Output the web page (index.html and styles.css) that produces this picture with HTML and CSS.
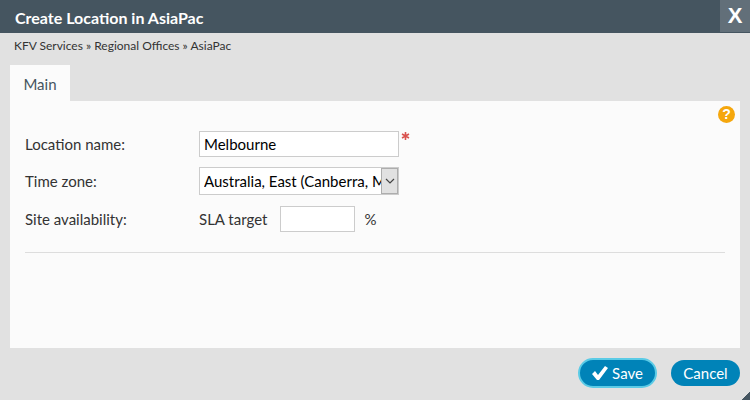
FILE: index.html
```html
<!DOCTYPE html>
<html lang="en">
<head>
    <meta charset="utf-8">
    <title>Create Location in AsiaPac</title>
    <link rel="stylesheet" href="styles.css">
</head>
<body>
    <header class="titlebar">
        <h1>Create Location in AsiaPac</h1>
        <button type="button" class="close">X</button>
    </header>

    <nav class="breadcrumb">
        <a href="#">KFV Services</a> » <a href="#">Regional Offices</a> » <a href="#">AsiaPac</a>
    </nav>

    <form class="dialog">
        <div class="tabs">
            <button type="button" class="tab">Main</button>
        </div>

        <div class="panel">
            <button type="button" class="help" aria-label="Help">?</button>

            <div class="fields">
                <label for="name">Location name:</label>
                <div class="field">
                    <input type="text" id="name" class="text" value="Melbourne" required>
                    <svg class="required" width="9" height="8" viewBox="0 0 9 8">
                        <path d="M4.5 0v8M1 2l7 4M8 2l-7 4"/>
                    </svg>
                </div>

                <label for="timezone">Time zone:</label>
                <div class="field">
                    <div class="select">
                        <select id="timezone">
                            <option>Australia, East (Canberra, Melbourne, Sydney)</option>
                        </select>
                        <span class="arrow">
                            <svg width="10" height="6" viewBox="0 0 10 6"><path d="M1 1l4 4 4-4"/></svg>
                        </span>
                    </div>
                </div>

                <span>Site availability:</span>
                <div class="field sla">
                    <label for="sla">SLA target</label>
                    <input type="text" id="sla" class="text short">
                    <span>%</span>
                </div>
            </div>
        </div>

        <div class="actions">
            <button type="submit" class="button save">
                <svg width="16" height="16" viewBox="0 0 16 16"><path d="M0 9l3-3 3 4 7-9 3 2-9 12H5z"/></svg>
                Save
            </button>
            <button type="button" class="button">Cancel</button>
        </div>
    </form>

    <div class="resize"></div>
</body>
</html>
```

FILE: styles.css
```css
* {
    box-sizing: border-box;
}
body {
    display: flex;
    flex-direction: column;
    position: relative;
    min-height: 100vh;
    margin: 0;
    background: #e1e1e1;
    color: #333;
    font-family: Lato, sans-serif;
    font-size: 15px;
    line-height: 20px;
}
button, input, select {
    font: inherit;
}
button {
    border: none;
    padding: 0;
    cursor: pointer;
}
.titlebar {
    display: flex;
    justify-content: space-between;
    align-items: center;
    height: 33px;
    padding-left: 15px;
    background: #455560;
    color: #fff;
}
.titlebar h1 {
    margin: 2px 0 0;
    font-size: 16px;
    line-height: 20px;
    font-weight: bold;
}
.close {
    align-self: flex-start;
    width: 30px;
    height: 32px;
    background: #626f79;
    color: #fff;
    font-family: "Liberation Sans", sans-serif;
    font-size: 22px;
    font-weight: bold;
}
.breadcrumb {
    padding: 5px 14px 0;
    font-size: 12px;
    line-height: 16px;
}
.breadcrumb a {
    color: inherit;
    text-decoration: none;
}
.dialog {
    display: flex;
    flex: 1;
    flex-direction: column;
    padding: 11px 10px 0;
}
.tab {
    display: block;
    min-width: 60px;
    height: 36px;
    padding: 2px 13px 0;
    background: #fbfbfb;
    color: #455560;
}
.panel {
    position: relative;
    flex: 1;
    padding: 30px 15px;
    background: #fbfbfb;
}
.help {
    position: absolute;
    top: 5px;
    right: 5px;
    width: 17px;
    height: 17px;
    border-radius: 50%;
    background: #f5a70d;
    color: #fff;
    font-family: "Liberation Sans", sans-serif;
    font-size: 14px;
    line-height: 17px;
    font-weight: bold;
}
.fields {
    display: grid;
    grid-template-columns: 164px 1fr;
    gap: 10px;
    align-items: center;
    padding-bottom: 19px;
    border-bottom: 1px solid #ddd;
}
.field {
    display: flex;
    align-items: center;
}
.text, .select {
    width: 200px;
    height: 26px;
    border: 1px solid #ccc;
    background: #fff;
    color: #000;
}
.text {
    padding: 0 4px;
}
.short {
    width: 75px;
}
.required {
    align-self: flex-start;
    margin: 1px 0 0 2px;
    fill: none;
    stroke: #d9534f;
    stroke-width: 1.6;
}
.select {
    position: relative;
    height: 28px;
}
.select select {
    width: 100%;
    height: 100%;
    padding: 0 16px 0 4px;
    border: none;
    background: none;
    color: #000;
    appearance: none;
}
.arrow {
    position: absolute;
    top: 0;
    right: 0;
    display: flex;
    align-items: center;
    justify-content: center;
    width: 17px;
    height: 26px;
    border: 1px solid #adadad;
    background: #e1e1e1;
    pointer-events: none;
}
.arrow path {
    fill: none;
    stroke: #444;
    stroke-width: 1.2;
}
.sla {
    min-height: 28px;
}
.sla label {
    margin-right: 13px;
}
.sla span {
    margin-left: 9px;
}
.actions {
    display: flex;
    justify-content: flex-end;
    align-items: center;
    gap: 14px;
    padding: 10px 0 12px;
}
.button {
    display: flex;
    align-items: center;
    justify-content: center;
    gap: 4px;
    min-width: 69px;
    height: 26px;
    padding: 0 12px;
    border-radius: 15px;
    background: #0083b8;
    color: #fff;
}
.save {
    min-width: 79px;
    height: 30px;
    border: 2px solid #5bcbe6;
}
.save svg {
    fill: #fff;
}
.resize {
    position: absolute;
    right: 0;
    bottom: 0;
    width: 8px;
    height: 8px;
    background: linear-gradient(135deg, transparent 50%, #455560 50%);
}
```
